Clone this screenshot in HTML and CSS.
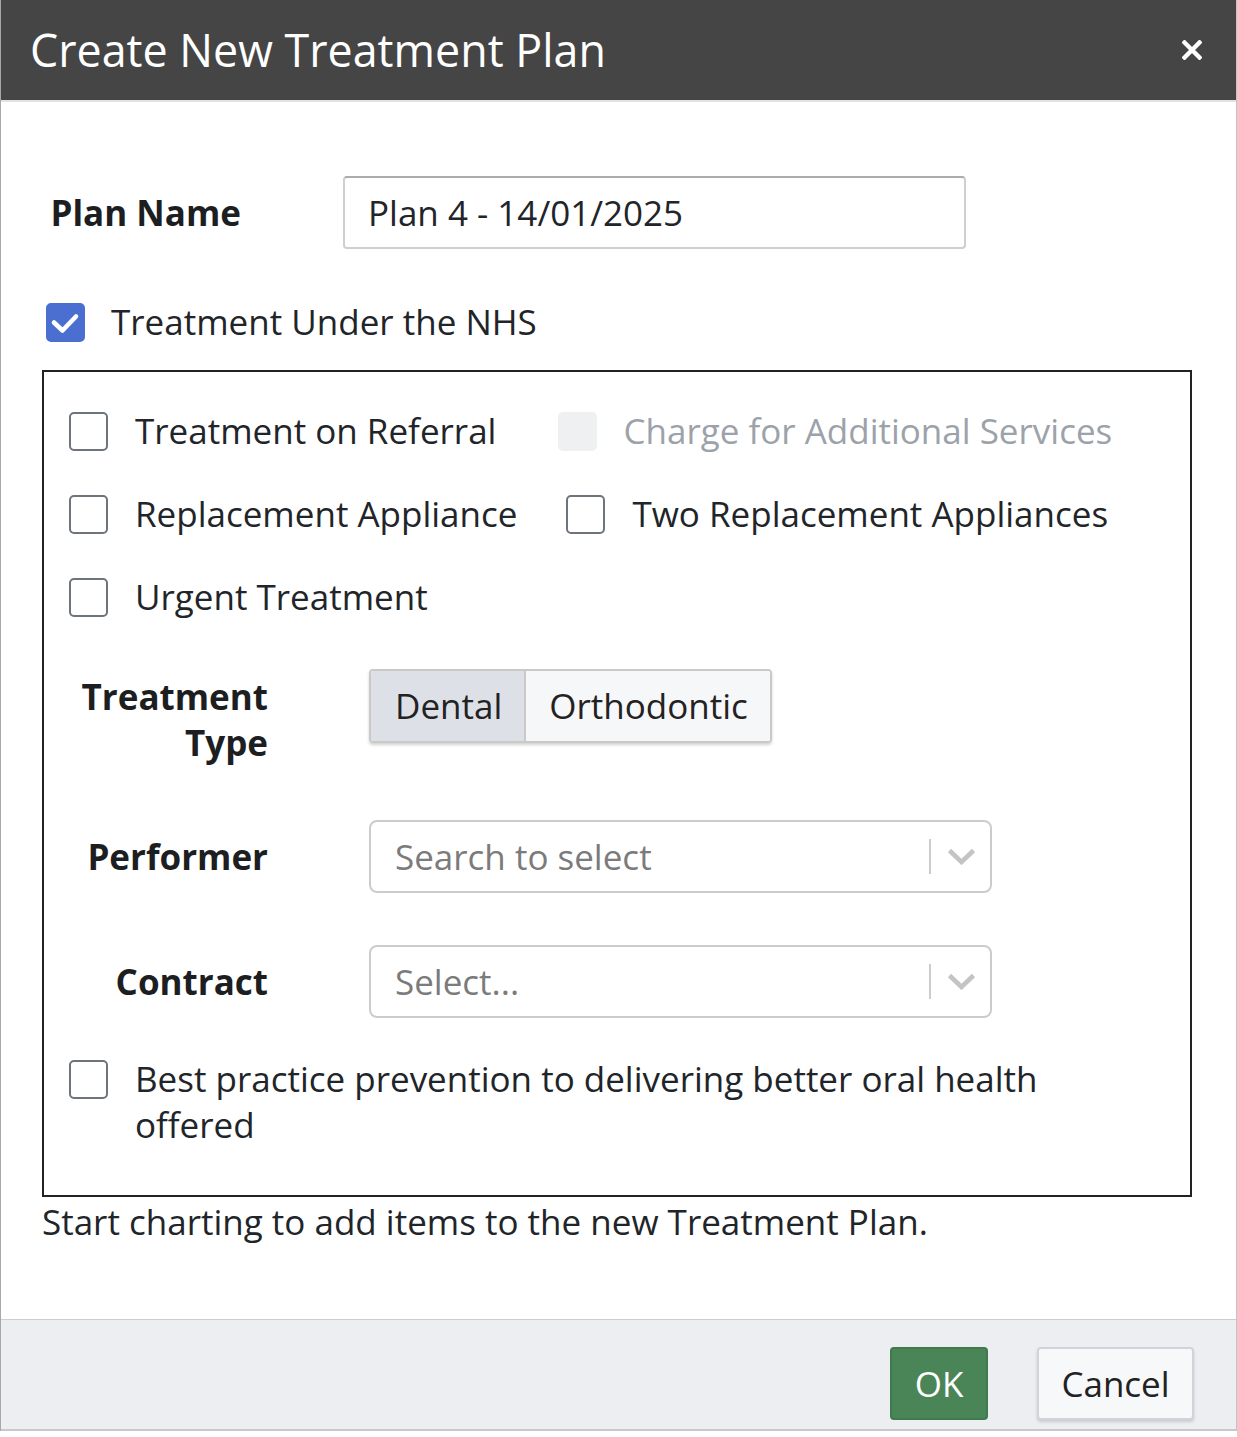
FILE: index.html
```html
<!DOCTYPE html>
<html lang="en">
<head>
<meta charset="utf-8">
<title>Create New Treatment Plan</title>
<link rel="stylesheet" href="styles.css">
</head>
<body>
<div class="dialog">
  <header class="dlg-head">
    <h1 class="dlg-title">Create New Treatment Plan</h1>
    <button class="close" type="button" aria-label="Close">
      <svg width="20" height="20" viewBox="0 0 20 20"><path d="M2.5 2.5 L17.5 17.5 M17.5 2.5 L2.5 17.5" stroke="#fff" stroke-width="4.4" stroke-linecap="square" fill="none"/></svg>
    </button>
  </header>

  <div class="dlg-body">
    <div class="plan-row">
      <label class="lbl">Plan Name</label>
      <div class="textbox">Plan 4 - 14/01/2025</div>
    </div>

    <label class="check nhs">
      <span class="cb on"><svg width="35" height="35" viewBox="0 0 35 35"><path d="M6 17.5 L14.5 25.5 L28 11.5" stroke="#fff" stroke-width="4.6" stroke-linecap="round" stroke-linejoin="round" fill="none"/></svg></span>
      <span>Treatment Under the NHS</span>
    </label>

    <div class="nhs-box">
      <div class="crow">
        <label class="check"><span class="cb"></span><span>Treatment on Referral</span></label>
        <label class="check disabled gap-a"><span class="cb off"></span><span>Charge for Additional Services</span></label>
      </div>
      <div class="crow next">
        <label class="check"><span class="cb"></span><span>Replacement Appliance</span></label>
        <label class="check gap-b"><span class="cb"></span><span>Two Replacement Appliances</span></label>
      </div>
      <div class="crow next">
        <label class="check"><span class="cb"></span><span>Urgent Treatment</span></label>
      </div>

      <div class="frow type-row">
        <label class="lbl flbl">Treatment Type</label>
        <div class="seg">
          <span class="seg-btn active">Dental</span>
          <span class="seg-btn">Orthodontic</span>
        </div>
      </div>

      <div class="frow perf-row">
        <label class="lbl flbl">Performer</label>
        <div class="select">
          <span class="ph">Search to select</span>
          <span class="ind">
            <span class="sep"></span>
            <svg width="29" height="17" viewBox="0 0 29 17"><path d="M2.5 2.5 L14.5 14 L26.5 2.5" stroke="#c4c4c4" stroke-width="4.6" fill="none"/></svg>
          </span>
        </div>
      </div>

      <div class="frow contract-row">
        <label class="lbl flbl">Contract</label>
        <div class="select">
          <span class="ph">Select...</span>
          <span class="ind">
            <span class="sep"></span>
            <svg width="29" height="17" viewBox="0 0 29 17"><path d="M2.5 2.5 L14.5 14 L26.5 2.5" stroke="#c4c4c4" stroke-width="4.6" fill="none"/></svg>
          </span>
        </div>
      </div>

      <label class="check best">
        <span class="cb"></span>
        <span class="best-text">Best practice prevention to delivering better oral health offered</span>
      </label>
    </div>

    <p class="hint">Start charting to add items to the new Treatment Plan.</p>
  </div>

  <footer class="dlg-foot">
    <button class="btn ok" type="button">OK</button>
    <button class="btn cancel" type="button">Cancel</button>
  </footer>
</div>
</body>
</html>
```

FILE: styles.css
```css
html, body {
  margin: 0;
  padding: 0;
  background: #ffffff;
}

body {
  font-family: "Open Sans", "Noto Sans", sans-serif;
  font-size: 35px;
  line-height: 46px;
  color: #212529;
}

.dialog {
  width: 1237px;
  box-sizing: border-box;
  border-left: 1px solid #a8a8a8;
  border-right: 1px solid #c4c4c4;
}

/* header */
.dlg-head {
  height: 102px;
  box-sizing: border-box;
  background: #454545;
  border-bottom: 2px solid #e2e2e2;
  display: flex;
  align-items: center;
  justify-content: space-between;
  padding: 0 34px 0 29px;
}

.dlg-title {
  margin: 0;
  font-size: 44.8px;
  font-weight: 400;
  line-height: 1;
  color: #ffffff;
}

.close {
  border: 0;
  background: transparent;
  padding: 0;
  width: 20px;
  height: 20px;
  display: flex;
}

/* body */
.dlg-body {
  padding: 0 44px 74px 41px;
}

.lbl {
  width: 199px;
  flex: none;
  text-align: right;
  font-weight: 700;
  color: #1c1e21;
  line-height: 46px;
}

.plan-row {
  display: flex;
  align-items: center;
  padding-top: 74px;
}

.plan-row .lbl {
  margin-right: 102px;
}

.textbox {
  width: 623px;
  height: 73px;
  box-sizing: border-box;
  border: 2px solid #cfcfcf;
  border-top-color: #acacac;
  border-radius: 4px;
  padding: 0 23px;
  display: flex;
  align-items: center;
  color: #212529;
}

/* checkboxes */
.check {
  display: flex;
  align-items: center;
  height: 46px;
}

.cb {
  width: 39px;
  height: 39px;
  box-sizing: border-box;
  border: 2px solid #6e747b;
  border-radius: 5px;
  background: #fff;
  flex: none;
  margin-right: 27px;
  display: flex;
  align-items: center;
  justify-content: center;
}

.cb.on {
  background: #4a6fd0;
  border-color: #4a6fd0;
}

.cb.off {
  background: #eef0f2;
  border-color: #eef0f2;
  margin-right: 26px;
}

.disabled {
  color: #9ca2aa;
}

.nhs {
  margin-top: 50px;
  padding-left: 4px;
}

.nhs .cb {
  margin-right: 26px;
}

/* NHS fieldset */
.nhs-box {
  margin-top: 25px;
  border: 2px solid #222222;
  padding: 36px 25px 47px 25px;
}

.crow {
  display: flex;
  align-items: center;
}

.crow.next {
  margin-top: 37px;
}

.gap-a {
  margin-left: 62px;
}

.gap-b {
  margin-left: 49px;
}

.frow {
  display: flex;
}

.flbl {
  margin-right: 101px;
}

.type-row {
  margin-top: 49px;
  align-items: flex-start;
}

.type-row .flbl {
  padding-top: 5px;
}

.seg {
  display: flex;
  height: 74px;
  box-sizing: border-box;
  border: 2px solid #c9c9c9;
  border-radius: 4px;
  box-shadow: 0 2px 3px rgba(0, 0, 0, 0.18);
  overflow: hidden;
}

.seg-btn {
  display: flex;
  align-items: center;
  padding: 0 22px 0 23px;
  background: #f6f7f9;
  color: #222;
}

.seg-btn.active {
  background: #dde1e7;
  border-right: 2px solid #c9c9c9;
  padding: 0 22px 0 24px;
}

.perf-row {
  margin-top: 54px;
  align-items: center;
}

.contract-row {
  margin-top: 52px;
  align-items: center;
}

.select {
  width: 623px;
  height: 73px;
  box-sizing: border-box;
  border: 2px solid #cccccc;
  border-radius: 8px;
  display: flex;
  align-items: center;
  justify-content: space-between;
  padding: 0 14px 0 24px;
}

.ph {
  color: #7b7b7b;
}

.ind {
  display: flex;
  align-items: center;
}

.sep {
  width: 2px;
  height: 35px;
  background: #cccccc;
  margin-right: 16px;
}

.ind svg {
  display: block;
}

.best {
  margin-top: 38px;
  align-items: flex-start;
  height: auto;
}

.best .cb {
  margin-top: 4px;
}

.best-text {
  max-width: 960px;
}

.hint {
  margin: 2px 0 0;
  line-height: 46px;
}

/* footer */
.dlg-foot {
  border-top: 1px solid #cdcdcd;
  border-bottom: 2px solid #c9c9c9;
  background: #eceef1;
  display: flex;
  justify-content: flex-end;
  gap: 49px;
  padding: 27px 42px 9px;
}

.btn {
  height: 73px;
  box-sizing: border-box;
  font-family: "Open Sans", "Noto Sans", sans-serif;
  font-size: 35px;
  border-radius: 4px;
  padding: 0;
  cursor: pointer;
}

.ok {
  width: 98px;
  background: #4a8557;
  border: 2px solid #3f7a4c;
  color: #ffffff;
}

.cancel {
  width: 157px;
  background: #f7f8fa;
  border: 2px solid #d0d3d7;
  color: #222;
  box-shadow: 0 2px 3px rgba(0, 0, 0, 0.15);
}
```
